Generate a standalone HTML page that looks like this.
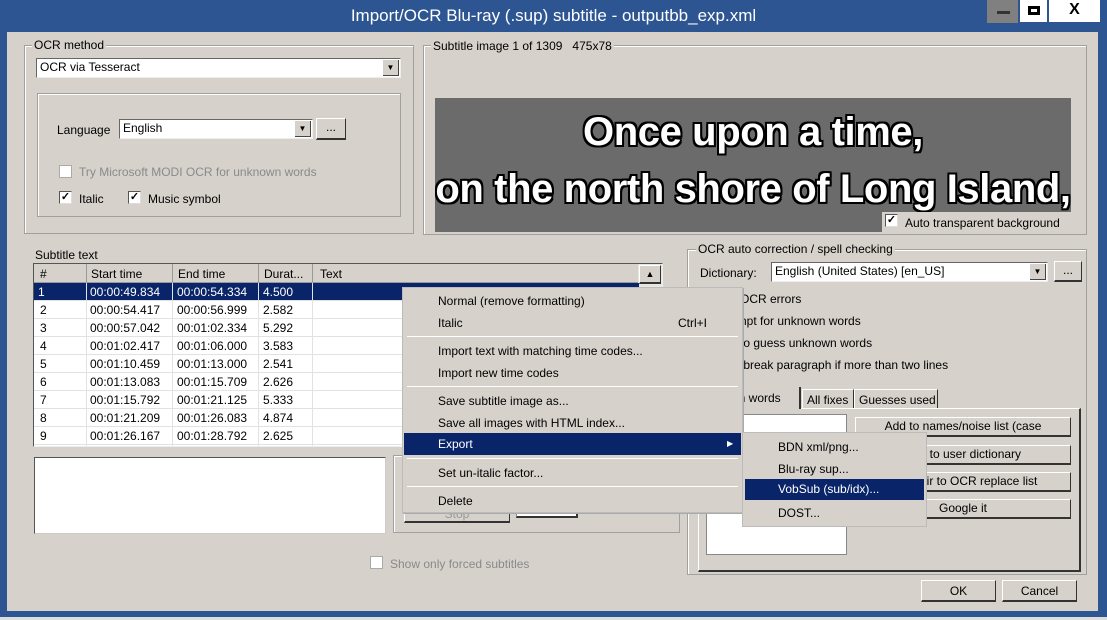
<!DOCTYPE html>
<html><head><meta charset="utf-8"><style>
*{margin:0;padding:0;box-sizing:border-box}
body{width:1107px;height:620px;overflow:hidden;background:#2c5592;font-family:"Liberation Sans",sans-serif;font-size:12px;color:#000;position:relative}
.a{position:absolute}
.t{position:absolute;white-space:nowrap;line-height:14px}
.g{color:#8a8a8a}
.grp{position:absolute;border:1px solid #a0a0a0;box-shadow:1px 1px 0 #fff inset}
.lg{position:absolute;background:#d6d1cb;padding:0 2px;line-height:13px;white-space:nowrap}
.cb{position:absolute;width:13px;height:13px;background:#fff;border:1px solid #555;border-right-color:#ddd;border-bottom-color:#ddd;font-size:11px;line-height:10px;text-align:center;font-weight:bold}
.cmb{position:absolute;background:#fff;border:1px solid #666;border-right-color:#eee;border-bottom-color:#eee;line-height:17px;padding-left:3px}
.dd{position:absolute;right:1px;top:1px;bottom:1px;width:16px;background:#d6d1cb;border-right:1px solid #444;border-bottom:1px solid #444;font-size:8px;text-align:center;line-height:16px}
.btn{position:absolute;background:#d6d1cb;border-top:1px solid #fff;border-left:1px solid #fff;border-right:1px solid #333;border-bottom:2px solid #333;text-align:center;line-height:17px;white-space:nowrap;overflow:hidden}
.row{position:absolute;left:0;width:605px;height:18px;border-bottom:1px solid #e2e2e2;background:#fff}
.row span{position:absolute;top:2px;white-space:nowrap}
.sel{background:#0a246a;color:#fff}
.mi{position:absolute;left:0;right:0;height:22px;line-height:22px}
.sep{position:absolute;left:4px;right:4px;height:1px;background:#a0a0a0;border-bottom:1px solid #fff}
.big{position:absolute;left:0;width:636px;text-align:center;color:#fff;font-weight:bold;font-size:40px;line-height:44px;letter-spacing:-0.4px;white-space:nowrap;text-shadow:2px 0 #000,-2px 0 #000,0 2px #000,0 -2px #000,2px 2px #000,-2px -2px #000,2px -2px #000,-2px 2px #000}
</style></head><body>
<div class="t" style="left:0;width:1107px;top:6px;text-align:center;color:#fff;font-size:17px;line-height:20px">Import/OCR Blu-ray (.sup) subtitle - outputbb_exp.xml</div>
<div class="a" style="left:987px;top:0;width:31px;height:23px;background:#808080"><div class="a" style="left:10px;top:11px;width:13px;height:3px;background:#333"></div></div>
<div class="a" style="left:1020px;top:0;width:27px;height:22px;background:#fff"><div class="a" style="left:8px;top:6px;width:12px;height:9px;border:3px solid #000"></div></div>
<div class="a" style="left:1049px;top:0;width:51px;height:22px;background:#fff;text-align:center;font-weight:bold;font-size:16px;line-height:20px">X</div>
<div class="a" style="left:7px;top:32px;width:1091px;height:579px;background:#d6d1cb"></div>
<div class="a" style="left:0;top:617px;width:1107px;height:3px;background:#ddd"></div>

<div class="grp" style="left:24px;top:45px;width:390px;height:189px"></div>
<div class="lg" style="left:32px;top:39px">OCR method</div>
<div class="cmb" style="left:36px;top:58px;width:365px;height:20px">OCR via Tesseract<div class="dd">▼</div></div>
<div class="grp" style="left:37px;top:93px;width:364px;height:124px"></div>
<div class="t" style="left:57px;top:123px">Language</div>
<div class="cmb" style="left:119px;top:119px;width:194px;height:20px">English<div class="dd">▼</div></div>
<div class="btn" style="left:316px;top:118px;width:30px;height:22px">...</div>
<div class="cb" style="left:59px;top:165px;border-color:#aaa"></div>
<div class="t g" style="left:79px;top:165px">Try Microsoft MODI OCR for unknown words</div>
<div class="cb" style="left:59px;top:191px">✓</div>
<div class="t" style="left:79px;top:192px">Italic</div>
<div class="cb" style="left:128px;top:191px">✓</div>
<div class="t" style="left:148px;top:192px">Music symbol</div>

<div class="grp" style="left:423px;top:45px;width:664px;height:190px"></div>
<div class="lg" style="left:431px;top:40px">Subtitle image 1 of 1309&nbsp;&nbsp; 475x78</div>
<div class="a" style="left:435px;top:98px;width:636px;height:134px;background:#6b6b6b;overflow:hidden">
<div class="big" style="top:12px">Once upon a time,</div>
<div class="big" style="top:69px">on the north shore of Long Island,</div>
<div class="a" style="left:447px;top:114px;width:189px;height:20px;background:#d6d1cb"></div>
</div>
<div class="cb" style="left:885px;top:214px">✓</div>
<div class="t" style="left:905px;top:216px">Auto transparent background</div>

<div class="t" style="left:35px;top:248px">Subtitle text</div>
<div class="a" style="left:33px;top:263px;width:630px;height:184px;background:#fff;border:1px solid #555;border-right-color:#eee;border-bottom-color:#eee;overflow:hidden">
<div class="a" style="left:0;top:0;width:628px;height:19px;background:#d6d1cb;border-bottom:1px solid #999"></div>
<div class="t" style="left:6px;top:3px">#</div>
<div class="a" style="left:52px;top:0;width:1px;height:19px;background:#999"></div>
<div class="t" style="left:57px;top:3px">Start time</div>
<div class="a" style="left:138px;top:0;width:1px;height:19px;background:#999"></div>
<div class="t" style="left:144px;top:3px">End time</div>
<div class="a" style="left:224px;top:0;width:1px;height:19px;background:#999"></div>
<div class="t" style="left:230px;top:3px">Durat...</div>
<div class="a" style="left:278px;top:0;width:1px;height:19px;background:#999"></div>
<div class="t" style="left:286px;top:3px">Text</div>
<div class="a" style="left:604px;top:0;width:24px;height:182px;background:#e8e6e3"></div>
<div class="btn" style="left:605px;top:1px;width:22px;height:19px;font-size:9px;line-height:16px">▲</div>
<div class="row sel" style="top:19px"><span style="left:4px">1</span><span style="left:56px">00:00:49.834</span><span style="left:143px">00:00:54.334</span><span style="left:229px">4.500</span></div>
<div class="row" style="top:37px"><span style="left:6px">2</span><span style="left:56px">00:00:54.417</span><span style="left:143px">00:00:56.999</span><span style="left:229px">2.582</span></div>
<div class="row" style="top:55px"><span style="left:6px">3</span><span style="left:56px">00:00:57.042</span><span style="left:143px">00:01:02.334</span><span style="left:229px">5.292</span></div>
<div class="row" style="top:73px"><span style="left:6px">4</span><span style="left:56px">00:01:02.417</span><span style="left:143px">00:01:06.000</span><span style="left:229px">3.583</span></div>
<div class="row" style="top:91px"><span style="left:6px">5</span><span style="left:56px">00:01:10.459</span><span style="left:143px">00:01:13.000</span><span style="left:229px">2.541</span></div>
<div class="row" style="top:109px"><span style="left:6px">6</span><span style="left:56px">00:01:13.083</span><span style="left:143px">00:01:15.709</span><span style="left:229px">2.626</span></div>
<div class="row" style="top:127px"><span style="left:6px">7</span><span style="left:56px">00:01:15.792</span><span style="left:143px">00:01:21.125</span><span style="left:229px">5.333</span></div>
<div class="row" style="top:145px"><span style="left:6px">8</span><span style="left:56px">00:01:21.209</span><span style="left:143px">00:01:26.083</span><span style="left:229px">4.874</span></div>
<div class="row" style="top:163px"><span style="left:6px">9</span><span style="left:56px">00:01:26.167</span><span style="left:143px">00:01:28.792</span><span style="left:229px">2.625</span></div>
<div class="a" style="left:52px;top:19px;width:1px;height:170px;background:#e2e2e2"></div>
<div class="a" style="left:138px;top:19px;width:1px;height:170px;background:#e2e2e2"></div>
<div class="a" style="left:224px;top:19px;width:1px;height:170px;background:#e2e2e2"></div>
<div class="a" style="left:278px;top:19px;width:1px;height:170px;background:#e2e2e2"></div>
</div>
<div class="a" style="left:34px;top:457px;width:352px;height:77px;background:#fff;border:1px solid #555;border-right-color:#ccc;border-bottom-color:#ccc"></div>
<div class="grp" style="left:393px;top:455px;width:287px;height:78px"></div>
<div class="btn g" style="left:404px;top:505px;width:106px;height:18px;color:#999">Stop</div>
<div class="a" style="left:516px;top:505px;width:62px;height:13px;background:#fff;border:1px solid #888;border-bottom:2px solid #333;border-right:2px solid #333"></div>
<div class="cb" style="left:370px;top:556px;border-color:#aaa"></div>
<div class="t g" style="left:390px;top:557px">Show only forced subtitles</div>

<div class="grp" style="left:687px;top:249px;width:400px;height:326px"></div>
<div class="lg" style="left:696px;top:243px">OCR auto correction / spell checking</div>
<div class="t" style="left:700px;top:266px">Dictionary:</div>
<div class="cmb" style="left:771px;top:262px;width:277px;height:20px">English (United States) [en_US]<div class="dd">▼</div></div>
<div class="btn" style="left:1054px;top:261px;width:28px;height:21px">...</div>
<div class="t" style="left:740px;top:292px">OCR errors</div>
<div class="t" style="left:740px;top:314px">npt for unknown words</div>
<div class="t" style="left:740px;top:336px">to guess unknown words</div>
<div class="t" style="left:736px;top:358px">› break paragraph if more than two lines</div>
<div class="a" style="left:698px;top:408px;width:383px;height:164px;border:1px solid #fff;border-right:2px solid #333;border-bottom:2px solid #333"></div>
<div class="a" style="left:700px;top:387px;width:101px;height:22px;border-right:2px solid #333;background:#d6d1cb"></div>
<div class="t" style="left:730px;top:391px">wn words</div>
<div class="a" style="left:802px;top:389px;width:52px;height:19px;border:1px solid #fff;border-right:1px solid #333;border-bottom:none"></div>
<div class="t" style="left:807px;top:393px">All fixes</div>
<div class="a" style="left:854px;top:389px;width:84px;height:19px;border:1px solid #fff;border-right:1px solid #333;border-bottom:none"></div>
<div class="t" style="left:859px;top:393px">Guesses used</div>
<div class="a" style="left:706px;top:414px;width:141px;height:141px;background:#fff;border:1px solid #888"></div>
<div class="btn" style="left:855px;top:417px;width:216px;height:20px">Add to names/noise list (case</div>
<div class="btn" style="left:855px;top:445px;width:216px;height:20px">Add to user dictionary</div>
<div class="btn" style="left:855px;top:472px;width:216px;height:20px">Add pair to OCR replace list</div>
<div class="btn" style="left:855px;top:499px;width:216px;height:20px">Google it</div>
<div class="btn" style="left:921px;top:580px;width:75px;height:22px;line-height:21px">OK</div>
<div class="btn" style="left:1002px;top:580px;width:75px;height:22px;line-height:21px">Cancel</div>

<div class="a" style="left:402px;top:287px;width:341px;height:226px;background:#d6d1cb;border:1px solid #bbb;box-shadow:1px 1px 0 #aaa">
<div class="mi" style="top:2px"><span style="position:absolute;left:35px">Normal (remove formatting)</span></div>
<div class="mi" style="top:24px"><span style="position:absolute;left:35px">Italic</span><span style="position:absolute;left:275px">Ctrl+I</span></div>
<div class="sep" style="top:48px"></div>
<div class="mi" style="top:52px"><span style="position:absolute;left:35px">Import text with matching time codes...</span></div>
<div class="mi" style="top:74px"><span style="position:absolute;left:35px">Import new time codes</span></div>
<div class="sep" style="top:98px"></div>
<div class="mi" style="top:102px"><span style="position:absolute;left:35px">Save subtitle image as...</span></div>
<div class="mi" style="top:124px"><span style="position:absolute;left:35px">Save all images with HTML index...</span></div>
<div class="mi sel" style="top:145px;left:1px;right:1px"><span style="position:absolute;left:34px">Export</span><span style="position:absolute;left:323px;font-size:8px">▶</span></div>
<div class="sep" style="top:170px"></div>
<div class="mi" style="top:174px"><span style="position:absolute;left:35px">Set un-italic factor...</span></div>
<div class="sep" style="top:198px"></div>
<div class="mi" style="top:202px"><span style="position:absolute;left:35px">Delete</span></div>
</div>
<div class="a" style="left:742px;top:432px;width:185px;height:95px;background:#d6d1cb;border:1px solid #bbb">
<div class="mi" style="top:3px"><span style="position:absolute;left:35px">BDN xml/png...</span></div>
<div class="mi" style="top:25px"><span style="position:absolute;left:35px">Blu-ray sup...</span></div>
<div class="mi sel" style="top:46px;left:2px;right:2px;height:21px"><span style="position:absolute;left:33px;line-height:21px">VobSub (sub/idx)...</span></div>
<div class="mi" style="top:69px"><span style="position:absolute;left:35px">DOST...</span></div>
</div>
</body></html>
